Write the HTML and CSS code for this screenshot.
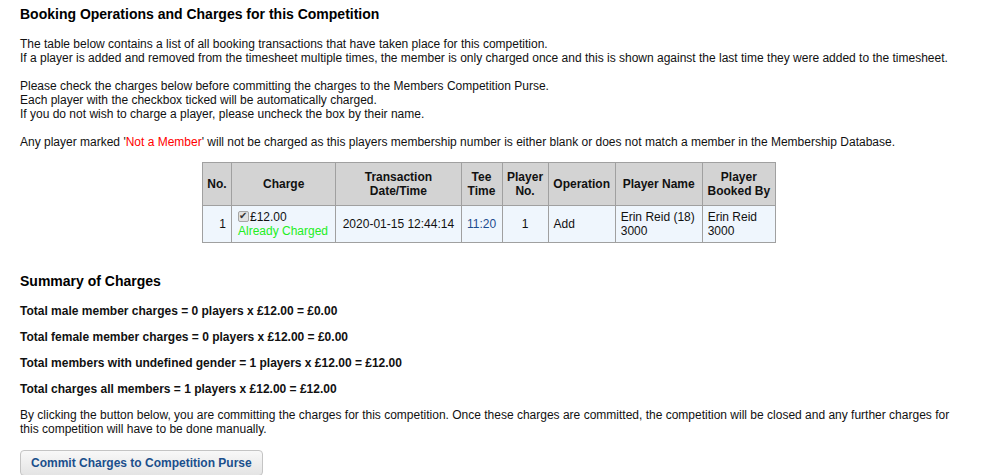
FILE: index.html
```html
<!DOCTYPE html>
<html lang="en">
<head>
    <meta charset="UTF-8">
    <title>Booking Operations and Charges</title>
    <link rel="stylesheet" href="styles.css">
</head>
<body>
    <div class="page">
        <h2>Booking Operations and Charges for this Competition</h2>
        <p>The table below contains a list of all booking transactions that have taken place for this competition.<br>
        If a player is added and removed from the timesheet multiple times, the member is only charged once and this is shown against the last time they were added to the timesheet.</p>
        <p>Please check the charges below before committing the charges to the Members Competition Purse.<br>
        Each player with the checkbox ticked will be automatically charged.<br>
        If you do not wish to charge a player, please uncheck the box by their name.</p>
        <p>Any player marked '<span class="not-member">Not a Member</span>' will not be charged as this players membership number is either blank or does not match a member in the Membership Database.</p>

        <table class="bookings">
            <tr>
                <th>No.</th>
                <th>Charge</th>
                <th>Transaction<br>Date/Time</th>
                <th>Tee<br>Time</th>
                <th>Player<br>No.</th>
                <th>Operation</th>
                <th>Player Name</th>
                <th>Player<br>Booked By</th>
            </tr>
            <tr>
                <td class="num">1</td>
                <td class="charge"><input type="checkbox" checked disabled>£12.00<br><span class="charged">Already Charged</span></td>
                <td class="center">2020-01-15 12:44:14</td>
                <td class="center tee">11:20</td>
                <td class="center">1</td>
                <td>Add</td>
                <td>Erin Reid (18)<br>3000</td>
                <td>Erin Reid<br>3000</td>
            </tr>
        </table>

        <h2 class="summary-title">Summary of Charges</h2>
        <p class="total">Total male member charges = 0 players x £12.00 = £0.00</p>
        <p class="total">Total female member charges = 0 players x £12.00 = £0.00</p>
        <p class="total">Total members with undefined gender = 1 players x £12.00 = £12.00</p>
        <p class="total">Total charges all members = 1 players x £12.00 = £12.00</p>
        <p class="notice">By clicking the button below, you are committing the charges for this competition. Once these charges are committed, the competition will be closed and any further charges for this competition will have to be done manually.</p>
        <button class="commit">Commit Charges to Competition Purse</button>
    </div>
</body>
</html>
```

FILE: styles.css
```css
body {
    font-family: 'Liberation Sans', Arial, sans-serif;
    font-size: 12px;
    line-height: 14px;
    color: #111;
    background: #fff;
    margin: 0;
    padding: 0;
}
.page {
    padding: 0 20px;
}
h2 {
    font-size: 14px;
    line-height: 16px;
    font-weight: bold;
    color: #000;
    margin: 6px 0 15px;
}
p {
    margin: 0 0 14px;
}
.not-member {
    color: #ff0000;
}
.bookings {
    border-collapse: collapse;
    width: 574px;
    margin: -1px 0 0 182px;
    border: 1px solid #a0a0a0;
}
.bookings th {
    background: #d3d3d3;
    font-weight: bold;
    padding: 7px 4px;
    border: 1px solid #a0a0a0;
    text-align: center;
    vertical-align: middle;
}
.bookings td {
    background: #eff6fd;
    padding: 4px 5px;
    border: 1px solid #a0a0a0;
    vertical-align: middle;
    text-align: left;
}
.bookings td.num {
    text-align: right;
}
.bookings td.center {
    text-align: center;
}
.bookings td.tee {
    color: #1d4c8f;
}
.bookings td.charge {
    padding-left: 6px;
}
.charge input {
    appearance: none;
    -webkit-appearance: none;
    position: relative;
    width: 11px;
    height: 11px;
    margin: 0 1px 0 0;
    vertical-align: -1px;
    border: 1px solid #a5a5a5;
    border-radius: 2px;
    background: #e2e2e2;
}
.charge input::before {
    content: '\2714';
    position: absolute;
    left: 0;
    top: -2px;
    font-size: 10px;
    line-height: 12px;
    color: #333;
}
.charged {
    color: #22ee22;
}
.summary-title {
    margin-top: 30px;
}
.total {
    font-weight: bold;
    margin-bottom: 12px;
}
.notice {
    margin-top: 11px;
}
.commit {
    font-family: 'Liberation Sans', Arial, sans-serif;
    font-size: 12px;
    font-weight: bold;
    color: #1b4f8c;
    background: linear-gradient(to bottom, #f8f8f8, #e4e4e4);
    border: 1px solid #c4c4c4;
    border-radius: 4px;
    height: 26px;
    padding: 0 10px;
    cursor: pointer;
}
```
